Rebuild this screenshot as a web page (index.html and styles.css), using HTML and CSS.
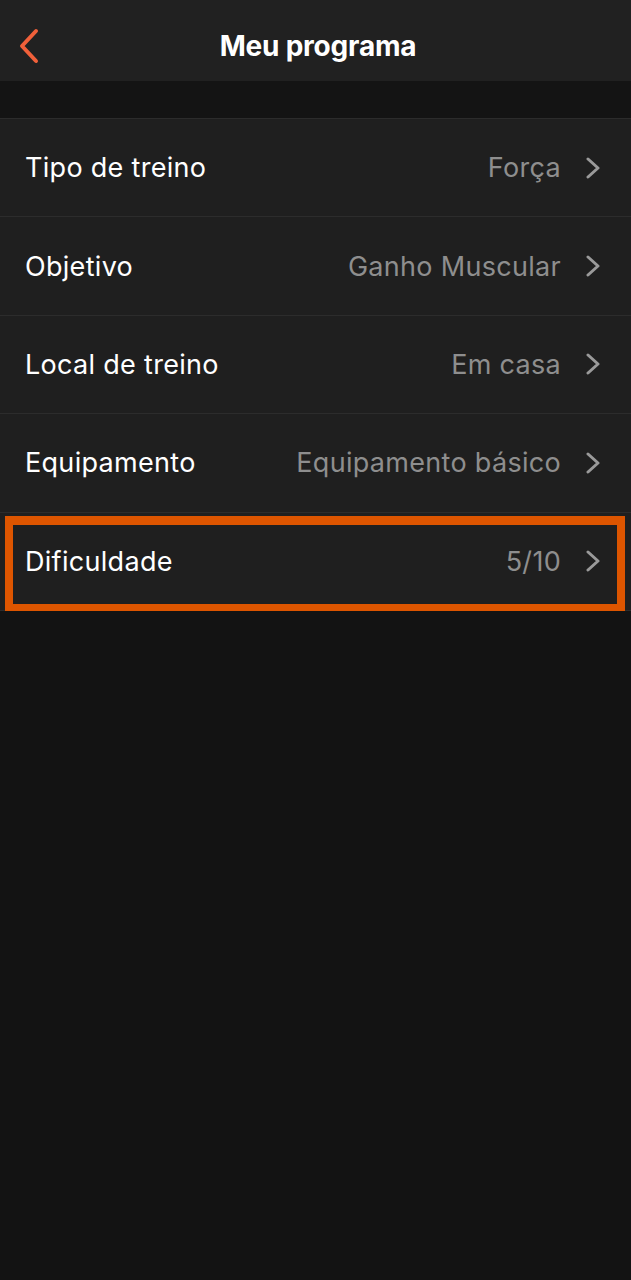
FILE: index.html
```html
<!DOCTYPE html>
<html lang="pt">
<head>
  <meta charset="UTF-8">
  <title>Meu programa</title>
  <link rel="stylesheet" href="styles.css">
</head>
<body>

  <div class="header">
    <a class="back" href="#">
      <svg width="26" height="36" viewBox="0 0 26 36">
        <path d="M20 3 L6 18 L20 33" fill="none" stroke="#f0603a" stroke-width="4" stroke-linecap="round" stroke-linejoin="round"/>
      </svg>
    </a>
    <h1>Meu programa</h1>
  </div>

  <div class="spacer"></div>

  <div class="list">
    <div class="row">
      <span class="label">Tipo de treino</span>
      <span class="value">Força</span>
      <svg class="chev" width="16" height="22" viewBox="0 0 16 22"><path d="M3 2 L13 11 L3 20" fill="none" stroke="#9a9a9a" stroke-width="3" stroke-linecap="round" stroke-linejoin="round"/></svg>
    </div>
    <div class="row">
      <span class="label">Objetivo</span>
      <span class="value">Ganho Muscular</span>
      <svg class="chev" width="16" height="22" viewBox="0 0 16 22"><path d="M3 2 L13 11 L3 20" fill="none" stroke="#9a9a9a" stroke-width="3" stroke-linecap="round" stroke-linejoin="round"/></svg>
    </div>
    <div class="row">
      <span class="label">Local de treino</span>
      <span class="value">Em casa</span>
      <svg class="chev" width="16" height="22" viewBox="0 0 16 22"><path d="M3 2 L13 11 L3 20" fill="none" stroke="#9a9a9a" stroke-width="3" stroke-linecap="round" stroke-linejoin="round"/></svg>
    </div>
    <div class="row">
      <span class="label">Equipamento</span>
      <span class="value">Equipamento básico</span>
      <svg class="chev" width="16" height="22" viewBox="0 0 16 22"><path d="M3 2 L13 11 L3 20" fill="none" stroke="#9a9a9a" stroke-width="3" stroke-linecap="round" stroke-linejoin="round"/></svg>
    </div>
    <div class="row highlighted">
      <span class="label">Dificuldade</span>
      <span class="value">5/10</span>
      <svg class="chev" width="16" height="22" viewBox="0 0 16 22"><path d="M3 2 L13 11 L3 20" fill="none" stroke="#9a9a9a" stroke-width="3" stroke-linecap="round" stroke-linejoin="round"/></svg>
      <div class="mark"></div>
    </div>
  </div>

</body>
</html>
```

FILE: styles.css
```css
body {
  margin: 0;
  font-family: Inter, 'Noto Sans', sans-serif;
  background: #131313;
  color: #fff;
}

.header {
  height: 81px;
  box-sizing: border-box;
  padding-top: 10px;
  background: #212121;
  display: flex;
  align-items: center;
  justify-content: center;
  position: relative;
}

.header h1 {
  margin: 0;
  font-size: 28px;
  font-weight: 700;
  letter-spacing: -0.2px;
  padding-left: 5px;
}

.back {
  position: absolute;
  left: 16px;
  top: 28px;
  display: block;
  line-height: 0;
}

.spacer {
  height: 37px;
  background: #141414;
}

.list {
  border-top: 1px solid #2c2c2c;
}

.row {
  height: 98.4px;
  box-sizing: border-box;
  background: #1f1f1f;
  border-bottom: 1px solid #2c2c2c;
  display: flex;
  align-items: center;
  padding: 0 30px 0 25px;
  position: relative;
}

.label {
  font-size: 27px;
  letter-spacing: 0.3px;
  flex: 1;
}

.value {
  font-size: 27px;
  letter-spacing: 0.3px;
  color: #8e8e8e;
  margin-right: 24px;
}

.chev {
  display: block;
}

.mark {
  position: absolute;
  left: 5px;
  right: 6px;
  top: 3px;
  bottom: -3px;
  border: 9px solid #dd5500;
  border-left-width: 8px;
  border-right-width: 8px;
}
```
